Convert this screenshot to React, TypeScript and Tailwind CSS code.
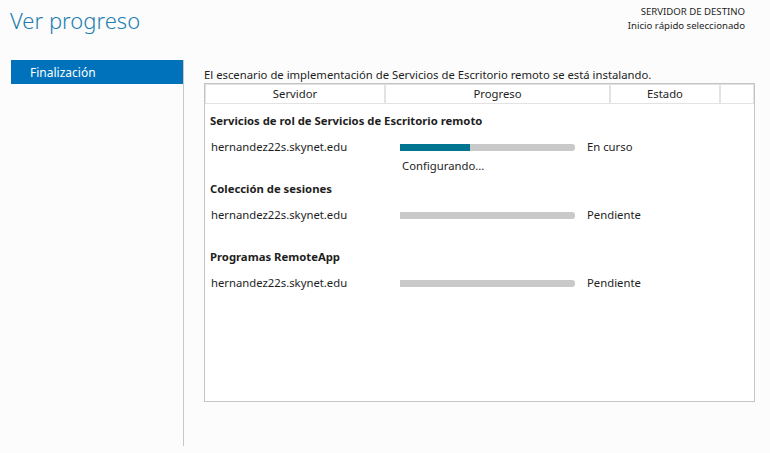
import React from 'react';

interface TaskRow {
  title: string;
  host: string;
  progress: number;
  status: string;
  detail?: string;
}

const rows: TaskRow[] = [
  {
    title: 'Servicios de rol de Servicios de Escritorio remoto',
    host: 'hernandez22s.skynet.edu',
    progress: 40,
    status: 'En curso',
    detail: 'Configurando...',
  },
  {
    title: 'Colección de sesiones',
    host: 'hernandez22s.skynet.edu',
    progress: 0,
    status: 'Pendiente',
  },
  {
    title: 'Programas RemoteApp',
    host: 'hernandez22s.skynet.edu',
    progress: 0,
    status: 'Pendiente',
  },
];

function Section({ row, last }: { row: TaskRow; last: boolean }) {
  return (
    <div className={row.detail ? 'mb-[4px]' : last ? '' : 'mb-[22px]'}>
      <div className="h-[20px] pl-[5px] font-bold leading-[20px]">{row.title}</div>
      <div className="mt-[6px] flex h-[20px] items-center">
        <div className="w-[195px] pl-[6px]">{row.host}</div>
        <div className="h-[7px] w-[175px] overflow-hidden rounded-r-[3px] bg-[#c9c9c9]">
          <div className="h-full bg-[#007591]" style={{ width: `${row.progress}%` }} />
        </div>
        <div className="pl-[12px]">{row.status}</div>
      </div>
      {row.detail && <div className="h-[18px] pl-[197px] leading-[18px]">{row.detail}</div>}
    </div>
  );
}

export default function App() {
  return (
    <div
      className="h-[453px] w-[770px] overflow-hidden bg-[#fcfcfc] text-[11.3px] text-[#1e1e1e]"
      style={{ fontFamily: '"Noto Sans", "Open Sans", sans-serif' }}
    >
      <div className="flex h-[60px] justify-between">
        <div className="pl-[10px] pt-[4px] text-[22px] font-light text-[#1f7fb0]">Ver progreso</div>
        <div className="pr-[25px] pt-[5px] text-right text-[9.6px] leading-[14px]">
          <div>SERVIDOR DE DESTINO</div>
          <div>Inicio rápido seleccionado</div>
        </div>
      </div>
      <div className="flex">
        <div className="h-[386px] w-[184px] shrink-0 border-r border-[#c8c8c8] pl-[11px]">
          <div className="h-[24px] bg-[#0072bc] pl-[19px] pt-[2px] leading-[22px] text-[12px] text-white">
            Finalización
          </div>
        </div>
        <div className="flex-1 pl-[20px]">
          <div className="h-[23px] pt-[7px] leading-[16px]">
            El escenario de implementación de Servicios de Escritorio remoto se está instalando.
          </div>
          <div className="h-[319px] w-[551px] border border-[#c4c4c4] bg-white">
            <div className="flex h-[20px] leading-[18px]">
              <div className="w-[180px] border border-[#e3e3e3] text-center">Servidor</div>
              <div className="w-[225px] border border-[#e3e3e3] text-center">Progreso</div>
              <div className="w-[110px] border border-[#e3e3e3] text-center">Estado</div>
              <div className="flex-1 border border-[#e3e3e3]" />
            </div>
            <div className="pt-[7px]">
              {rows.map((row, i) => (
                <Section key={row.title} row={row} last={i === rows.length - 1} />
              ))}
            </div>
          </div>
        </div>
      </div>
    </div>
  );
}
